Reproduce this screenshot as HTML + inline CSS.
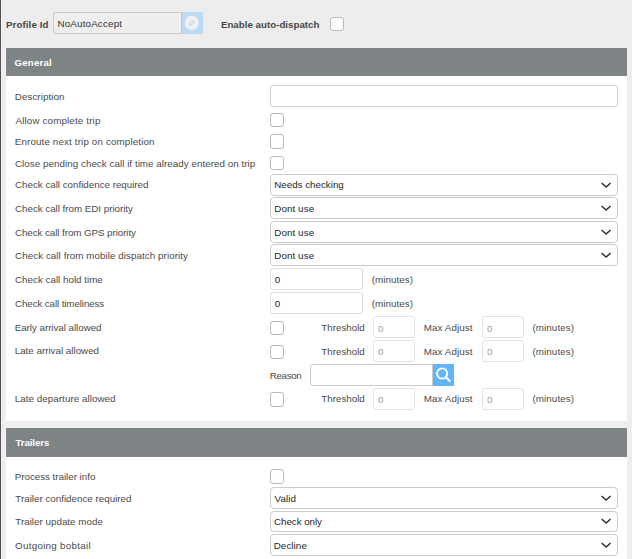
<!DOCTYPE html>
<html><head><meta charset="utf-8"><style>
*{margin:0;padding:0;box-sizing:border-box}
html,body{width:632px;height:559px;overflow:hidden;background:#ededed;font-family:"Liberation Sans",sans-serif;font-size:10px;color:#444;position:relative}
.a{position:absolute}
.t{position:absolute;white-space:nowrap;line-height:0;height:0}
.b{font-weight:bold}
.inp{position:absolute;background:#fff;border:1px solid #cfcfcf;border-radius:3px}
.sel{position:absolute;background:#fff;border:1px solid #cacaca;border-radius:4px}
.cb{position:absolute;width:14px;height:14.5px;background:#fff;border:1px solid #b9b9b9;border-radius:3px}
.ni{position:absolute;background:#fff;border:1px solid #dcdcdc;border-radius:3px}

</style></head><body>
<div class="a" style="left:0px;top:0px;width:1px;height:559px;background:#525252"></div>
<div class="a" style="left:1px;top:0px;width:1px;height:559px;background:#f0f0f0"></div>
<div class="t" style="left:5.92px;top:24.64px;font-size:9.70px;letter-spacing:0.130px;font-weight:bold;color:#454545;">Profile Id</div>
<div class="a" style="left:53px;top:12px;width:128px;height:22px;background:#efefef;border:1px solid #c9c9c9;border-right:none;border-radius:3px 0 0 3px"></div>
<div class="t" style="left:57.47px;top:23.85px;font-size:9.80px;letter-spacing:0.170px;color:#333;">NoAutoAccept</div>
<div class="a" style="left:181px;top:12px;width:22px;height:22px;background:#bbdaf4;border-left:1px solid #a9cdee"><svg width="22" height="22" viewBox="0 0 22 22" style="position:absolute;left:-1px;top:0"><circle cx="10.8" cy="10.9" r="7.05" fill="#f2f2f2"/><path d="M14.1 8.0 L12.2 12.4 L7.8 13.9 L9.5 9.4 Z" fill="#bbdaf4"/><circle cx="10.8" cy="10.9" r="0.85" fill="#f2f2f2"/></svg></div>
<div class="t" style="left:220.92px;top:24.64px;font-size:9.70px;letter-spacing:0.031px;font-weight:bold;color:#454545;">Enable auto-dispatch</div>
<div class="cb" style="left:330px;top:17px;width:14px;height:14px;"></div>
<div class="a" style="left:5px;top:47px;width:622px;height:374px;background:#fff;border-top:1px solid #f2f2f2;border-left:1px solid #f3f3f3"></div>
<div class="a" style="left:6px;top:48px;width:621px;height:28px;background:#7e8385"></div>
<div class="t" style="left:14.61px;top:62.64px;font-size:9.70px;letter-spacing:0.154px;font-weight:bold;color:#fff;">General</div>
<div class="t" style="left:14.72px;top:96.60px;font-size:9.80px;letter-spacing:0.082px;color:#4a4a4a;">Description</div>
<div class="t" style="left:15.50px;top:120.60px;font-size:9.80px;letter-spacing:0.145px;color:#4a4a4a;">Allow complete trip</div>
<div class="t" style="left:14.72px;top:141.60px;font-size:9.80px;letter-spacing:0.140px;color:#4a4a4a;">Enroute next trip on completion</div>
<div class="t" style="left:15.01px;top:163.60px;font-size:9.80px;letter-spacing:0.042px;color:#4a4a4a;">Close pending check call if time already entered on trip</div>
<div class="t" style="left:15.01px;top:184.60px;font-size:9.80px;letter-spacing:-0.016px;color:#4a4a4a;">Check call confidence required</div>
<div class="t" style="left:15.01px;top:208.60px;font-size:9.80px;letter-spacing:-0.027px;color:#4a4a4a;">Check call from EDI priority</div>
<div class="t" style="left:15.01px;top:232.60px;font-size:9.80px;letter-spacing:-0.077px;color:#4a4a4a;">Check call from GPS priority</div>
<div class="t" style="left:15.01px;top:255.60px;font-size:9.80px;letter-spacing:0.065px;color:#4a4a4a;">Check call from mobile dispatch priority</div>
<div class="t" style="left:15.01px;top:279.60px;font-size:9.80px;letter-spacing:0.008px;color:#4a4a4a;">Check call hold time</div>
<div class="t" style="left:15.01px;top:303.60px;font-size:9.80px;letter-spacing:-0.111px;color:#4a4a4a;">Check call timeliness</div>
<div class="t" style="left:14.72px;top:327.60px;font-size:9.80px;letter-spacing:-0.043px;color:#4a4a4a;">Early arrival allowed</div>
<div class="t" style="left:14.72px;top:351.10px;font-size:9.80px;letter-spacing:-0.005px;color:#4a4a4a;">Late arrival allowed</div>
<div class="t" style="left:14.72px;top:398.60px;font-size:9.80px;letter-spacing:0.054px;color:#4a4a4a;">Late departure allowed</div>
<div class="inp" style="left:270px;top:85px;width:348px;height:22px;"></div>
<div class="cb" style="left:270px;top:113px;width:14px;height:14px;"></div>
<div class="cb" style="left:270px;top:134px;width:14px;height:14.5px;"></div>
<div class="cb" style="left:270px;top:156px;width:14px;height:14px;"></div>
<div class="sel" style="left:270px;top:174px;width:348px;height:22px;"></div>
<svg width="12" height="8" viewBox="0 0 12 8" style="position:absolute;left:600px;top:180.70px"><path d="M1.6 2.0 L6.1 6.0 L10.6 2.0" fill="none" stroke="#333" stroke-width="1.55"/></svg>
<div class="t" style="left:274.22px;top:184.60px;font-size:9.80px;letter-spacing:-0.011px;color:#262626;">Needs checking</div>
<div class="sel" style="left:270px;top:197px;width:348px;height:22px;"></div>
<svg width="12" height="8" viewBox="0 0 12 8" style="position:absolute;left:600px;top:203.70px"><path d="M1.6 2.0 L6.1 6.0 L10.6 2.0" fill="none" stroke="#333" stroke-width="1.55"/></svg>
<div class="t" style="left:274.22px;top:208.60px;font-size:9.80px;letter-spacing:0.095px;color:#262626;">Dont use</div>
<div class="sel" style="left:270px;top:221px;width:348px;height:22px;"></div>
<svg width="12" height="8" viewBox="0 0 12 8" style="position:absolute;left:600px;top:227.70px"><path d="M1.6 2.0 L6.1 6.0 L10.6 2.0" fill="none" stroke="#333" stroke-width="1.55"/></svg>
<div class="t" style="left:274.22px;top:232.60px;font-size:9.80px;letter-spacing:0.095px;color:#262626;">Dont use</div>
<div class="sel" style="left:270px;top:244px;width:348px;height:22px;"></div>
<svg width="12" height="8" viewBox="0 0 12 8" style="position:absolute;left:600px;top:250.70px"><path d="M1.6 2.0 L6.1 6.0 L10.6 2.0" fill="none" stroke="#333" stroke-width="1.55"/></svg>
<div class="t" style="left:274.22px;top:255.60px;font-size:9.80px;letter-spacing:0.095px;color:#262626;">Dont use</div>
<div class="ni" style="left:270px;top:268px;width:93px;height:22px;"></div>
<div class="t" style="left:274.71px;top:280.10px;font-size:9.80px;letter-spacing:0.000px;color:#262626;">0</div>
<div class="t" style="left:371.66px;top:280.10px;font-size:9.80px;letter-spacing:0.065px;color:#4a4a4a;">(minutes)</div>
<div class="ni" style="left:270px;top:292px;width:93px;height:22px;"></div>
<div class="t" style="left:274.71px;top:304.10px;font-size:9.80px;letter-spacing:0.000px;color:#262626;">0</div>
<div class="t" style="left:371.66px;top:304.10px;font-size:9.80px;letter-spacing:0.065px;color:#4a4a4a;">(minutes)</div>
<div class="cb" style="left:270px;top:321px;width:14px;height:14px;"></div>
<div class="t" style="left:321.30px;top:328.10px;font-size:9.80px;letter-spacing:-0.010px;color:#4a4a4a;">Threshold</div>
<div class="ni" style="left:373px;top:316px;width:42px;height:22px;border-color:#e2e2e2"></div>
<div class="t" style="left:377.96px;top:328.60px;font-size:9.80px;letter-spacing:0.000px;color:#a0a0a0;">0</div>
<div class="t" style="left:423.72px;top:328.10px;font-size:9.80px;letter-spacing:0.088px;color:#4a4a4a;">Max Adjust</div>
<div class="ni" style="left:482px;top:316px;width:42px;height:22px;border-color:#e2e2e2"></div>
<div class="t" style="left:486.96px;top:328.60px;font-size:9.80px;letter-spacing:0.000px;color:#a0a0a0;">0</div>
<div class="t" style="left:532.41px;top:328.10px;font-size:9.80px;letter-spacing:0.096px;color:#4a4a4a;">(minutes)</div>
<div class="cb" style="left:270px;top:345px;width:14px;height:14px;"></div>
<div class="t" style="left:321.30px;top:351.60px;font-size:9.80px;letter-spacing:-0.010px;color:#4a4a4a;">Threshold</div>
<div class="ni" style="left:373px;top:340px;width:42px;height:22px;border-color:#e2e2e2"></div>
<div class="t" style="left:377.96px;top:352.10px;font-size:9.80px;letter-spacing:0.000px;color:#a0a0a0;">0</div>
<div class="t" style="left:423.72px;top:351.60px;font-size:9.80px;letter-spacing:0.088px;color:#4a4a4a;">Max Adjust</div>
<div class="ni" style="left:482px;top:340px;width:42px;height:22px;border-color:#e2e2e2"></div>
<div class="t" style="left:486.96px;top:352.10px;font-size:9.80px;letter-spacing:0.000px;color:#a0a0a0;">0</div>
<div class="t" style="left:532.41px;top:351.60px;font-size:9.80px;letter-spacing:0.096px;color:#4a4a4a;">(minutes)</div>
<div class="cb" style="left:270px;top:392px;width:14px;height:14.5px;"></div>
<div class="t" style="left:321.30px;top:399.10px;font-size:9.80px;letter-spacing:-0.010px;color:#4a4a4a;">Threshold</div>
<div class="ni" style="left:373px;top:388px;width:42px;height:22px;border-color:#e2e2e2"></div>
<div class="t" style="left:377.96px;top:399.60px;font-size:9.80px;letter-spacing:0.000px;color:#a0a0a0;">0</div>
<div class="t" style="left:423.72px;top:399.10px;font-size:9.80px;letter-spacing:0.088px;color:#4a4a4a;">Max Adjust</div>
<div class="ni" style="left:482px;top:388px;width:42px;height:22px;border-color:#e2e2e2"></div>
<div class="t" style="left:486.96px;top:399.60px;font-size:9.80px;letter-spacing:0.000px;color:#a0a0a0;">0</div>
<div class="t" style="left:532.41px;top:399.10px;font-size:9.80px;letter-spacing:0.096px;color:#4a4a4a;">(minutes)</div>
<div class="t" style="left:269.72px;top:375.60px;font-size:9.80px;letter-spacing:-0.339px;color:#4a4a4a;">Reason</div>
<div class="a" style="left:310px;top:364px;width:123px;height:22px;background:#fff;border:1px solid #cacaca;border-radius:3px 0 0 3px"></div>
<div class="a" style="left:433px;top:364px;width:21px;height:22px;background:#64b4fc"><svg width="21" height="22" viewBox="0 0 21 22" style="position:absolute;left:0;top:0"><circle cx="9.1" cy="9.5" r="5.1" fill="none" stroke="#fff" stroke-width="1.9"/><path d="M12.9 13.2 L16.8 16.9" stroke="#fff" stroke-width="2" stroke-linecap="round"/></svg></div>
<div class="a" style="left:5px;top:427px;width:622px;height:132px;background:#fff;border-top:1px solid #f2f2f2;border-left:1px solid #f3f3f3"></div>
<div class="a" style="left:6px;top:428px;width:621px;height:29px;background:#7e8385"></div>
<div class="t" style="left:15.40px;top:442.64px;font-size:9.70px;letter-spacing:-0.081px;font-weight:bold;color:#fff;">Trailers</div>
<div class="t" style="left:14.72px;top:476.60px;font-size:9.80px;letter-spacing:-0.027px;color:#4a4a4a;">Process trailer info</div>
<div class="t" style="left:15.30px;top:498.60px;font-size:9.80px;letter-spacing:0.001px;color:#4a4a4a;">Trailer confidence required</div>
<div class="t" style="left:15.30px;top:521.60px;font-size:9.80px;letter-spacing:0.012px;color:#4a4a4a;">Trailer update mode</div>
<div class="t" style="left:15.11px;top:545.60px;font-size:9.80px;letter-spacing:0.275px;color:#4a4a4a;">Outgoing bobtail</div>
<div class="cb" style="left:270px;top:469px;width:14px;height:14.5px;"></div>
<div class="sel" style="left:270px;top:487px;width:348px;height:22px;"></div>
<svg width="12" height="8" viewBox="0 0 12 8" style="position:absolute;left:600px;top:493.70px"><path d="M1.6 2.0 L6.1 6.0 L10.6 2.0" fill="none" stroke="#333" stroke-width="1.55"/></svg>
<div class="t" style="left:274.50px;top:498.60px;font-size:9.80px;letter-spacing:0.122px;color:#262626;">Valid</div>
<div class="sel" style="left:270px;top:511px;width:348px;height:21px;"></div>
<svg width="12" height="8" viewBox="0 0 12 8" style="position:absolute;left:600px;top:517.20px"><path d="M1.6 2.0 L6.1 6.0 L10.6 2.0" fill="none" stroke="#333" stroke-width="1.55"/></svg>
<div class="t" style="left:274.01px;top:521.60px;font-size:9.80px;letter-spacing:-0.054px;color:#262626;">Check only</div>
<div class="sel" style="left:270px;top:534px;width:348px;height:22px;"></div>
<svg width="12" height="8" viewBox="0 0 12 8" style="position:absolute;left:600px;top:540.70px"><path d="M1.6 2.0 L6.1 6.0 L10.6 2.0" fill="none" stroke="#333" stroke-width="1.55"/></svg>
<div class="t" style="left:273.72px;top:545.60px;font-size:9.80px;letter-spacing:0.076px;color:#262626;">Decline</div>
</body></html>
